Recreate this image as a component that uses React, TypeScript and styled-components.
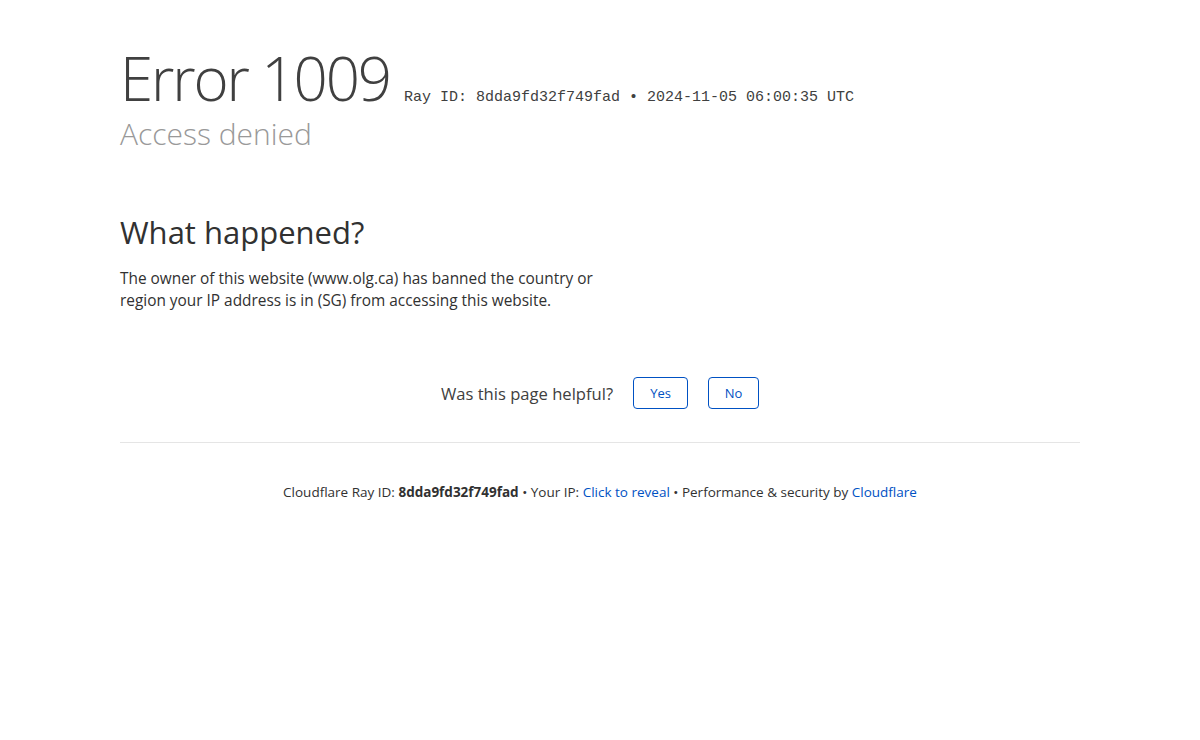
import React from "react";
import styled, { createGlobalStyle } from "styled-components";

const GlobalStyle = createGlobalStyle`
  html, body {
    margin: 0;
    padding: 0;
    background: #fff;
  }
  body {
    font-family: "Open Sans", "Noto Sans", "Liberation Sans", sans-serif;
    color: #404040;
    -webkit-font-smoothing: antialiased;
  }
`;

const Wrapper = styled.div`
  width: 960px;
  margin: 0 auto;
  padding-top: 48px;
`;

const Header = styled.header`
  display: flex;
  flex-direction: column;
`;

const TitleRow = styled.div`
  display: flex;
  align-items: baseline;
  gap: 14px;
`;

const Title = styled.h1`
  margin: 0;
  font-size: 60px;
  font-weight: 300;
  line-height: 60px;
  color: #404040;
  letter-spacing: -2.1px;
`;

const RayMeta = styled.span`
  font-family: "Liberation Mono", "Courier New", monospace;
  font-size: 15px;
  color: #404040;
`;

const Subtitle = styled.h2`
  margin: 8px 0 0;
  font-size: 30px;
  font-weight: 300;
  line-height: 36px;
  color: #999;
`;

const Section = styled.section`
  margin-top: 62px;
`;

const SectionTitle = styled.h2`
  margin: 0 0 18px;
  font-size: 31px;
  font-weight: 400;
  line-height: 36px;
  color: #313131;
`;

const Paragraph = styled.p`
  margin: 0;
  width: 510px;
  font-size: 15.4px;
  line-height: 22px;
  color: #313131;
`;

const Feedback = styled.div`
  margin-top: 65px;
  display: flex;
  justify-content: center;
  align-items: center;
  gap: 20px;
  padding-bottom: 33px;
  border-bottom: 1px solid #e5e5e5;
`;

const FeedbackLabel = styled.span`
  font-size: 16.6px;
  color: #404040;
`;

const FeedbackButton = styled.button<{ $w: number }>`
  width: ${(p) => p.$w}px;
  height: 32px;
  padding: 0;
  background: #fff;
  border: 1px solid #0051c3;
  border-radius: 4px;
  color: #0051c3;
  font-family: inherit;
  font-size: 13px;
  cursor: pointer;
`;

const Footer = styled.footer`
  margin-top: 40px;
  text-align: center;
  font-size: 13.5px;
  line-height: 18px;
  color: #313131;
`;

const Strong = styled.span`
  font-weight: 700;
`;

const Link = styled.a`
  color: #0051c3;
  text-decoration: none;
  cursor: pointer;
`;

export default function App() {
  return (
    <>
      <GlobalStyle />
      <Wrapper>
        <Header>
          <TitleRow>
            <Title>Error 1009</Title>
            <RayMeta>Ray ID: 8dda9fd32f749fad • 2024-11-05 06:00:35 UTC</RayMeta>
          </TitleRow>
          <Subtitle>Access denied</Subtitle>
        </Header>

        <Section>
          <SectionTitle>What happened?</SectionTitle>
          <Paragraph>
            The owner of this website (www.olg.ca) has banned the country or region your IP
            address is in (SG) from accessing this website.
          </Paragraph>
        </Section>

        <Feedback>
          <FeedbackLabel>Was this page helpful?</FeedbackLabel>
          <FeedbackButton $w={55}>Yes</FeedbackButton>
          <FeedbackButton $w={51}>No</FeedbackButton>
        </Feedback>

        <Footer>
          Cloudflare Ray ID: <Strong>8dda9fd32f749fad</Strong> • Your IP:{" "}
          <Link>Click to reveal</Link> • Performance &amp; security by <Link>Cloudflare</Link>
        </Footer>
      </Wrapper>
    </>
  );
}
